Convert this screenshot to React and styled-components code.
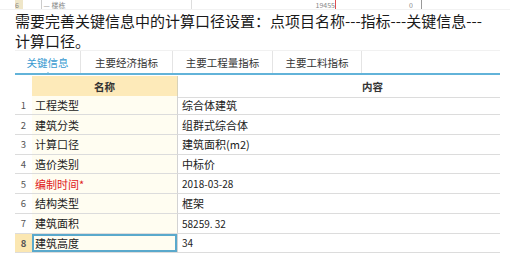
import React from 'react'
import styled, { createGlobalStyle } from 'styled-components'

const GlobalStyle = createGlobalStyle`
    body {
        margin: 0;
        background: #ffffff;
        font-family: "Noto Sans CJK SC", "Noto Sans", sans-serif;
        color: #222222;
    }
`;

const Page = styled.div`
    width: 510px;
    height: 264px;
    overflow: hidden;
`;

const Strip = styled.div`
    height: 9px;
    display: grid;
    grid-template-columns: 15px 8px 18px 150px 144px 78px 8px 420px;
    align-items: end;
    overflow: hidden;
    font-size: 7px;
    line-height: 7px;
    color: #888;
    border-bottom: 1px solid #f2f2f2;
`;
const StripCell = styled.div`
    height: 9px;
    display: flex;
    align-items: flex-end;
    justify-content: ${p => p.$right ? 'flex-end' : 'flex-start'};
    background: ${p => p.$bg || 'transparent'};
    border-left: ${p => p.$line ? `1px solid ${p.$line}` : 'none'};
    overflow: hidden;
`;

const Note = styled.p`
    margin: 0;
    padding: 1px 0 0 15px;
    font-size: 15px;
    line-height: 20px;
    color: #1a1a1a;
    white-space: nowrap;
`;

const Tabs = styled.div`
    margin: -1px 10px 0 15px;
    height: 22px;
    display: flex;
    border-top: 1px solid #f1f1f1;
    border-bottom: 2px solid #62b3d9;
    position: relative;
`;
const Tab = styled.div`
    position: relative;
    width: ${p => p.$w}px;
    display: flex;
    align-items: center;
    justify-content: center;
    font-size: 10.5px;
    color: ${p => p.$active ? '#3a9bd1' : '#333333'};
    border-right: 1px solid #e4e4e4;
    &::after {
        content: '';
        display: ${p => p.$active ? 'block' : 'none'};
        position: absolute;
        left: 50%;
        bottom: -2px;
        margin-left: -3px;
        border: 3px solid transparent;
        border-bottom-color: #62b3d9;
    }
`;

const Table = styled.div`
    margin: 1px 0 0 15px;
    width: 485px;
    display: grid;
    grid-template-columns: 17px 146px 322px;
    grid-auto-rows: 19.7px;
`;
const HeadCell = styled.div`
    height: 21px;
    display: flex;
    align-items: center;
    justify-content: ${p => p.$pad ? 'flex-start' : 'center'};
    padding-left: ${p => p.$pad || 0}px;
    font-size: 10.5px;
    font-weight: 700;
    color: #333;
    background: ${p => p.$bg || '#ffffff'};
    border-bottom: ${p => p.$teal ? '2px solid #7fb9b6' : '1px solid #dcdcdc'};
    border-right: ${p => p.$teal ? '1px solid #d8d2b8' : 'none'};
`;
const NumCell = styled.div`
    display: flex;
    align-items: center;
    justify-content: center;
    font-size: 9.5px;
    font-weight: ${p => p.$sel ? 700 : 400};
    color: #555;
    background: ${p => p.$sel ? '#fbe7b2' : '#ffffff'};
    border-bottom: 1px solid #dcdcdc;
`;
const NameCell = styled.div`
    display: flex;
    align-items: center;
    padding-left: 3px;
    font-size: 11px;
    color: ${p => p.$red ? '#e02020' : '#222'};
    background: #fffdf1;
    border-bottom: 1px solid #dcdcdc;
    border-right: 1px solid #d3d3d3;
    box-shadow: ${p => p.$sel ? 'inset 0 0 0 2px #5aa9cc' : 'none'};
`;
const ValueCell = styled.div`
    display: flex;
    align-items: center;
    padding-left: 4px;
    font-size: ${p => p.$num ? 10 : 11}px;
    color: #222;
    border-bottom: 1px solid #dcdcdc;
`;

const tabs = [
    { label: '关键信息', w: 65, active: true },
    { label: '主要经济指标', w: 91 },
    { label: '主要工程量指标', w: 99 },
    { label: '主要工料指标', w: 88 },
]

const rows = [
    ['工程类型', '综合体建筑'],
    ['建筑分类', '组群式综合体'],
    ['计算口径', '建筑面积(m2)'],
    ['造价类别', '中标价'],
    ['编制时间*', '2018-03-28', true, true],
    ['结构类型', '框架'],
    ['建筑面积', '58259. 32', false, true],
    ['建筑高度', '34', false, true],
]

const App = () => {
    return (
        <Page>
            <GlobalStyle />
            <Strip>
                <div />
                <StripCell $bg="#efe6c8">6</StripCell>
                <div />
                <StripCell $line="#cccccc">&nbsp;—&nbsp;楼栋</StripCell>
                <StripCell $line="#dddddd" $right>19455</StripCell>
                <StripCell $line="#e05050" $right>0</StripCell>
                <div />
                <StripCell $line="#999999" />
            </Strip>
            <Note>
                需要完善关键信息中的计算口径设置：点项目名称---指标---关键信息---<br />
                计算口径。
            </Note>
            <Tabs>
                {tabs.map(t => (
                    <Tab key={t.label} $w={t.w} $active={t.active}>{t.label}</Tab>
                ))}
            </Tabs>
            <Table>
                <HeadCell />
                <HeadCell $bg="#fdeab9" $teal>名称</HeadCell>
                <HeadCell $pad={184}>内容</HeadCell>
                {rows.map(([name, value, red, num], i) => {
                    const sel = i === rows.length - 1
                    return (
                        <React.Fragment key={name}>
                            <NumCell $sel={sel}>{i + 1}</NumCell>
                            <NameCell $red={red} $sel={sel}>{name}</NameCell>
                            <ValueCell $num={num}>{value}</ValueCell>
                        </React.Fragment>
                    )
                })}
            </Table>
        </Page>
    )
}
export default App
